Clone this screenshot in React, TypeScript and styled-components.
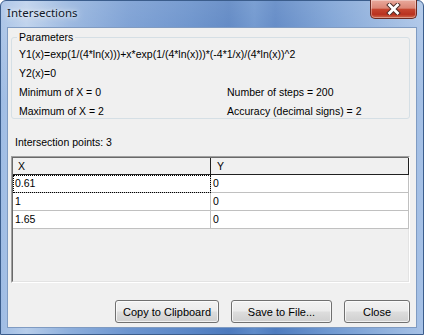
import React from "react";
import styled, { createGlobalStyle } from "styled-components";

const Global = createGlobalStyle`
  html, body { margin: 0; padding: 0; width: 424px; height: 335px; overflow: hidden; background: #ffffff; }
  #root { width: 424px; height: 335px; }
  * { box-sizing: border-box; }
`;

const Window = styled.div`
  width: 424px;
  height: 335px;
  display: flex;
  flex-direction: column;
  padding: 0 6px 6px 6px;
  border: 1px solid #3b5d8c;
  border-radius: 6px 6px 0 0;
  background:
    linear-gradient(180deg, rgba(255,255,255,0.18) 0%, rgba(255,255,255,0) 30%),
    linear-gradient(90deg, #9fbce4 0%, #b7cdea 6%, #8eafdc 16%, #6d95cf 30%, #5a86c6 45%, #4d7abd 54%, #5f8bc9 60%, #4f7cbf 65%, #7099d1 78%, #93b3de 92%, #a6c1e6 100%);
  font-family: "Liberation Sans", Arial, sans-serif;
  font-size: 10.5px;
  color: #000;
`;

const TitleBar = styled.div`
  height: 26px;
  flex: none;
  display: flex;
  align-items: flex-start;
  justify-content: space-between;
`;

const Title = styled.div`
  font-family: "Noto Sans", "Open Sans", sans-serif;
  font-size: 11.5px;
  line-height: 14px;
  padding-top: 5px;
  color: #101828;
  text-shadow: 0 0 8px rgba(255,255,255,0.9), 0 0 4px rgba(255,255,255,0.8);
`;

const CloseButton = styled.div`
  width: 47px;
  height: 19px;
  margin-top: -1px;
  border: 1px solid #6b2a22;
  border-top: none;
  border-radius: 0 0 5px 5px;
  display: flex;
  align-items: center;
  justify-content: center;
  background:
    linear-gradient(180deg, #e9a99c 0%, #db8676 45%, #c5452f 52%, #b9321f 80%, #cf6a4c 100%);
  box-shadow: inset 0 0 0 1px rgba(255,255,255,0.35);
`;

const Client = styled.div`
  flex: 1;
  display: flex;
  flex-direction: column;
  background: #f0f0f0;
  border: 1px solid #7f9bc2;
  padding: 3px 6px 3px 3px;
`;

const Group = styled.fieldset`
  margin: 0;
  padding: 3px 7px 0 7px;
  border: 1px solid #d5dfe5;
  border-radius: 3px;
  display: grid;
  grid-template-columns: 208px 1fr;
  row-gap: 5px;
  min-width: 0;
`;

const Legend = styled.legend`
  padding: 0 2px;
  margin-left: -2px;
  line-height: 13px;
`;

const ParamLine = styled.div<{ $span?: boolean }>`
  grid-column: ${(p) => (p.$span ? "1 / span 2" : "auto")};
  line-height: 14px;
  white-space: nowrap;
`;

const CountLabel = styled.div`
  margin: 17px 0 0 4px;
  line-height: 13px;
`;

const Grid = styled.div`
  margin-top: 7px;
  flex: 1;
  display: flex;
  flex-direction: column;
  border-top: 1px solid #a0a0a0;
  border-left: 1px solid #a0a0a0;
  border-right: 1px solid #ffffff;
  border-bottom: 1px solid #ffffff;
  background: #f0f0f0;
`;

const GridInner = styled.div`
  flex: 1;
  border-top: 1px solid #696969;
  border-left: 1px solid #696969;
  border-right: 1px solid #e3e3e3;
  border-bottom: 1px solid #e3e3e3;
  display: flex;
  flex-direction: column;
`;

const Row = styled.div`
  display: grid;
  grid-template-columns: 198px 198px;
`;

const HeadCell = styled.div<{ $first?: boolean }>`
  height: 17px;
  line-height: 16px;
  padding-left: ${(p) => (p.$first ? 5 : 6)}px;
  background: #f0f0f0;
  border-right: 1px solid #202020;
  border-bottom: 1px solid #202020;
`;

const Cell = styled.div<{ $focus?: boolean }>`
  height: 18px;
  line-height: 17px;
  padding-left: 2px;
  background: #ffffff;
  border-right: 1px solid #c0c0c0;
  border-bottom: 1px solid #c0c0c0;
  outline: ${(p) => (p.$focus ? "1px dotted #000" : "none")};
  outline-offset: -1px;
`;

const ButtonRow = styled.div`
  display: flex;
  justify-content: flex-end;
  gap: 12px;
  margin-top: 17px;
  padding-bottom: 1px;
`;

const Button = styled.div<{ $w: number }>`
  width: ${(p) => p.$w}px;
  height: 23px;
  display: flex;
  align-items: center;
  justify-content: center;
  font-size: 11px;
  border: 1px solid #707070;
  border-radius: 3px;
  background: linear-gradient(180deg, #f2f2f2 0%, #ebebeb 48%, #dddddd 52%, #cfcfcf 100%);
  box-shadow: inset 0 0 0 1px rgba(255,255,255,0.7);
`;

const rows = [
  ["0.61", "0"],
  ["1", "0"],
  ["1.65", "0"],
];

export default function App() {
  return (
    <>
      <Global />
      <Window>
        <TitleBar>
          <Title>Intersections</Title>
          <CloseButton>
            <svg width="15" height="12" viewBox="0 0 15 12">
              <path d="M3.5 2 L11.5 10 M11.5 2 L3.5 10" stroke="#4a2a26" strokeWidth="4.6" strokeLinecap="square" />
              <path d="M3.5 2 L11.5 10 M11.5 2 L3.5 10" stroke="#ffffff" strokeWidth="2.8" strokeLinecap="square" />
            </svg>
          </CloseButton>
        </TitleBar>
        <Client>
          <Group>
            <Legend>Parameters</Legend>
            <ParamLine $span>Y1(x)=exp(1/(4*ln(x)))+x*exp(1/(4*ln(x)))*(-4*1/x)/(4*ln(x))^2</ParamLine>
            <ParamLine $span>Y2(x)=0</ParamLine>
            <ParamLine>Minimum of X = 0</ParamLine>
            <ParamLine>Number of steps = 200</ParamLine>
            <ParamLine>Maximum of X = 2</ParamLine>
            <ParamLine>Accuracy (decimal signs) = 2</ParamLine>
          </Group>
          <CountLabel>Intersection points: 3</CountLabel>
          <Grid>
            <GridInner>
              <Row>
                <HeadCell $first>X</HeadCell>
                <HeadCell>Y</HeadCell>
              </Row>
              {rows.map((r, i) => (
                <Row key={i}>
                  <Cell $focus={i === 0}>{r[0]}</Cell>
                  <Cell>{r[1]}</Cell>
                </Row>
              ))}
            </GridInner>
          </Grid>
          <ButtonRow>
            <Button $w={104}>Copy to Clipboard</Button>
            <Button $w={101}>Save to File...</Button>
            <Button $w={66}>Close</Button>
          </ButtonRow>
        </Client>
      </Window>
    </>
  );
}
